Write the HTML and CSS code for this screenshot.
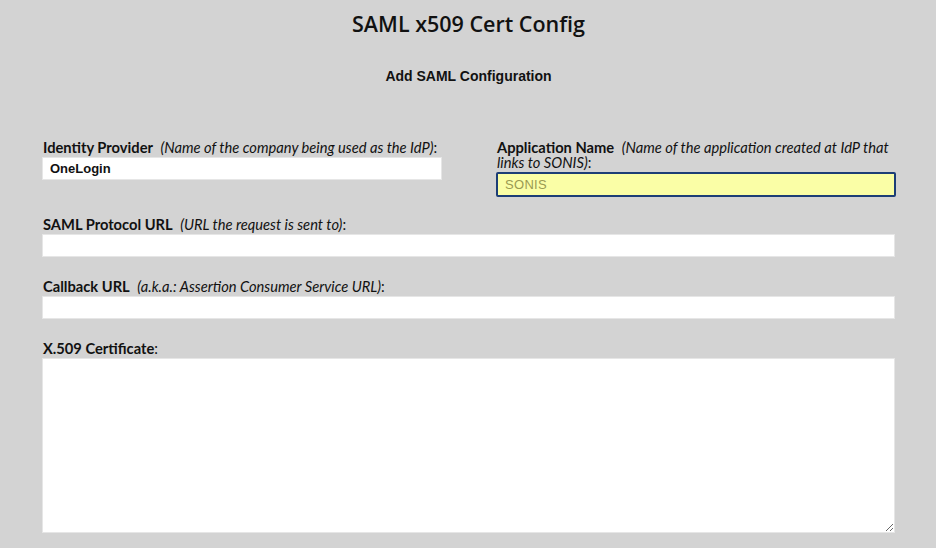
FILE: index.html
```html
<!DOCTYPE html>
<html>
<head>
<meta charset="utf-8">
<link rel="stylesheet" href="styles.css">
</head>
<body>
<div class="page">
  <h1 class="title">SAML x509 Cert Config</h1>
  <h2 class="subtitle">Add SAML Configuration</h2>
  <form class="form">
    <div class="row two">
      <div class="field">
        <label class="label"><b>Identity Provider</b>&nbsp; <i>(Name of the company being used as the IdP)</i>:</label>
        <input class="input strong" type="text" value="OneLogin">
      </div>
      <div class="field">
        <label class="label"><b>Application Name</b>&nbsp; <i>(Name of the application created at IdP that links to SONIS)</i>:</label>
        <input class="input autofill" type="text" value="SONIS">
      </div>
    </div>
    <div class="field">
      <label class="label"><b>SAML Protocol URL</b>&nbsp; <i>(URL the request is sent to)</i>:</label>
      <input class="input" type="text">
    </div>
    <div class="field">
      <label class="label"><b>Callback URL</b>&nbsp; <i>(a.k.a.: Assertion Consumer Service URL)</i>:</label>
      <input class="input" type="text">
    </div>
    <div class="field">
      <label class="label"><b>X.509 Certificate</b>:</label>
      <textarea class="textarea"></textarea>
    </div>
  </form>
</div>
</body>
</html>
```
FILE: styles.css
```css
html, body {
  margin: 0;
  padding: 0;
  background: #d3d3d3;
}
body {
  width: 936px;
  height: 548px;
  overflow: hidden;
}
.page {
  padding: 0 41px 0 42px;
  display: flex;
  flex-direction: column;
}
.title {
  margin: 10px 0 0;
  text-align: center;
  font-family: "Open Sans", sans-serif;
  font-weight: 600;
  font-size: 21.5px;
  line-height: 28px;
  color: #111;
}
.subtitle {
  margin: 30px 0 0;
  text-align: center;
  font-family: "Liberation Sans", Arial, sans-serif;
  font-weight: bold;
  font-size: 14px;
  line-height: 16px;
  color: #111;
}
.form {
  margin-top: 56px;
  display: flex;
  flex-direction: column;
  gap: 22px;
}
.row.two {
  display: grid;
  grid-template-columns: 400px 400px;
  column-gap: 54px;
  margin-bottom: -2px;
}
.field {
  display: flex;
  flex-direction: column;
}
.label {
  font-family: Lato, sans-serif;
  font-size: 14.7px;
  line-height: 15px;
  color: #111;
  margin: 0 0 2px 1px;
}
.label b {
  font-weight: 700;
}
.label i {
  font-style: italic;
}
.input {
  box-sizing: border-box;
  width: 100%;
  height: 23px;
  margin: 0;
  border: 1px solid #e6e6e6;
  background: #fff;
  padding: 0 7px;
  font-family: "Liberation Sans", Arial, sans-serif;
  font-size: 13px;
  color: #000;
  outline: none;
}
.input.strong {
  font-weight: bold;
  color: #111;
}
.input.autofill {
  height: 25px;
  background: #fafea6;
  border: 2px solid #1c3e76;
  border-radius: 2px;
  padding: 0 7px;
  color: #9a9a52;
  font-size: 13px;
  letter-spacing: 0.3px;
}
.textarea {
  box-sizing: border-box;
  width: 100%;
  height: 175px;
  margin: 0;
  border: 1px solid #e6e6e6;
  background: #fff;
  resize: vertical;
  outline: none;
}
```
